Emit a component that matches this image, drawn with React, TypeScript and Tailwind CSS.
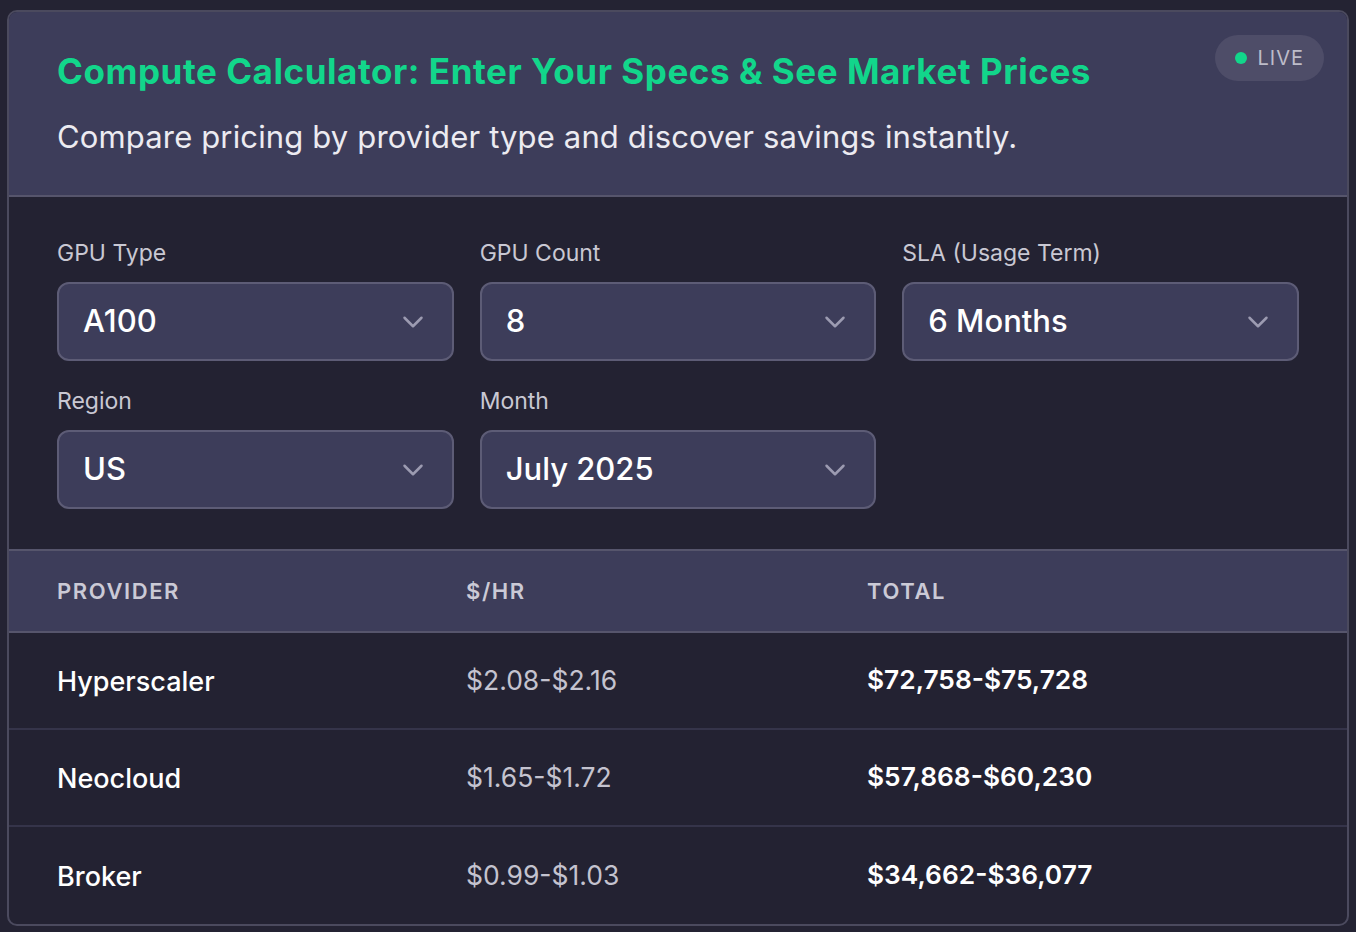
import { ChevronDown } from "lucide-react";

type Field = { label: string; value: string };

const fields: Field[] = [
  { label: "GPU Type", value: "A100" },
  { label: "GPU Count", value: "8" },
  { label: "SLA (Usage Term)", value: "6 Months" },
  { label: "Region", value: "US" },
  { label: "Month", value: "July 2025" },
];

const rows = [
  { provider: "Hyperscaler", hourly: "$2.08-$2.16", total: "$72,758-$75,728" },
  { provider: "Neocloud", hourly: "$1.65-$1.72", total: "$57,868-$60,230" },
  { provider: "Broker", hourly: "$0.99-$1.03", total: "$34,662-$36,077" },
];

function SelectBox({ label, value }: Field) {
  return (
    <div className="flex flex-col gap-[15px]">
      <label className="text-[23px] leading-[28px] text-[#c9c8d3]">{label}</label>
      <div className="flex h-[79px] items-center justify-between rounded-xl border-2 border-[#5d5c76] bg-[#3d3d5a] pl-[24px] pr-[22px]">
        <span className="text-[31px] font-medium text-white">{value}</span>
        <ChevronDown size={34} strokeWidth={1.75} className="text-[#9c9bb1]" />
      </div>
    </div>
  );
}

export default function App() {
  return (
    <div
      className="min-h-[932px] bg-[#242333] px-[7px] pt-[10px] pb-[6px]"
      style={{ fontFamily: "Inter, 'Noto Sans', sans-serif" }}
    >
      <div className="overflow-hidden rounded-[10px] border-2 border-[#4b4a5e] bg-[#232232]">
        <header className="relative border-b-2 border-[#56556c] bg-[#3d3d5a] px-[48px] pt-[37px] pb-[38px]">
          <h1 className="text-[35px] leading-[44px] font-bold tracking-[0.55px] text-[#12d68b]">
            Compute Calculator: Enter Your Specs &amp; See Market Prices
          </h1>
          <p className="mt-[24px] text-[31px] leading-[40px] tracking-[0.15px] text-[#ecebf1]">
            Compare pricing by provider type and discover savings instantly.
          </p>
          <div className="absolute top-[23px] right-[23px] flex h-[46px] items-center gap-[11px] rounded-full bg-[#4e4d68] px-[20px]">
            <span className="h-[12px] w-[12px] rounded-full bg-[#12d68b]" />
            <span className="text-[20px] tracking-[1px] text-[#bdbcc9]">LIVE</span>
          </div>
        </header>

        <section className="grid grid-cols-3 gap-x-[26px] gap-y-[26px] px-[48px] pt-[42px] pb-[40px]">
          {fields.map((f) => (
            <SelectBox key={f.label} {...f} />
          ))}
        </section>

        <div className="grid h-[84px] grid-cols-[409px_401px_1fr] items-center border-y-2 border-[#56556c] bg-[#3d3d5a] pl-[48px]">
          <span className="text-[22px] font-semibold tracking-[1.6px] text-[#cbcad6]">PROVIDER</span>
          <span className="text-[22px] font-semibold tracking-[1.6px] text-[#cbcad6]">$/HR</span>
          <span className="text-[22px] font-semibold tracking-[1.6px] text-[#cbcad6]">TOTAL</span>
        </div>

        {rows.map((r, i) => (
          <div
            key={r.provider}
            className={`grid h-[97px] grid-cols-[409px_401px_1fr] items-center pl-[48px] ${
              i < rows.length - 1 ? "border-b-2 border-[#35344a]" : ""
            }`}
          >
            <span className="mt-[4px] text-[27px] font-medium text-white">{r.provider}</span>
            <span className="text-[26.5px] text-[#c4c3cf]">{r.hourly}</span>
            <span className="-mt-[2px] text-[26.3px] font-semibold text-white">{r.total}</span>
          </div>
        ))}
      </div>
    </div>
  );
}
